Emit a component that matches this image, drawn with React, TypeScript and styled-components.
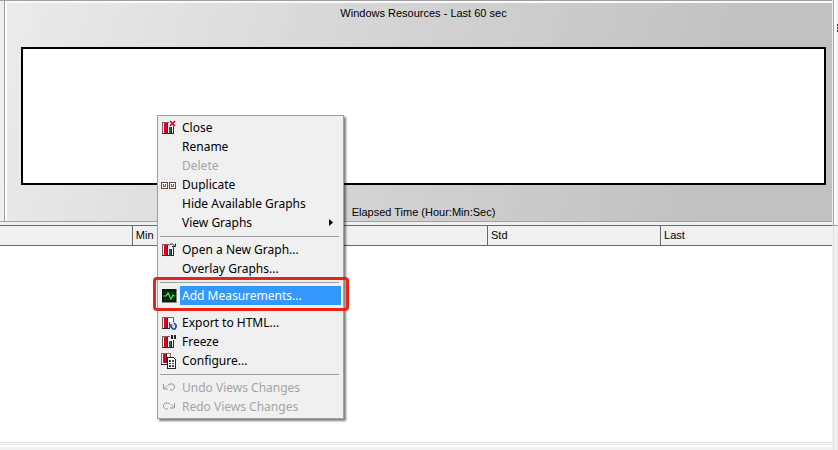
import React from "react";
import styled, { createGlobalStyle, css } from "styled-components";

const GlobalStyle = createGlobalStyle`
  * { box-sizing: border-box; }
  html, body, #root { height: 100%; }
  body { margin: 0; overflow: hidden; background: #f0f0f0; }
`;

const Window = styled.div`
  position: relative;
  display: flex;
  height: 100%;
  font-family: "Liberation Sans", Arial, sans-serif;
  font-size: 11px;
  color: #000;
`;

const Workspace = styled.main`
  flex: 1;
  min-width: 0;
  display: flex;
  flex-direction: column;
  border-top: 1px solid #a0a0a0;
`;

const GraphArea = styled.section`
  display: flex;
  height: 221px;
  border-bottom: 1px solid #a0a0a0;
`;

const LeftEdge = styled.div`
  width: 7px;
  border-left: 4px solid #f0f0f0;
  background: linear-gradient(90deg, #a0a0a0 1px, #fff 1px);
`;

const Graph = styled.div`
  flex: 1;
  display: flex;
  flex-direction: column;
  border-top: 2px solid #fafafa;
  padding: 0 6px 0 14px;
  background: linear-gradient(105deg, #ebebeb 0%, #d2d2d2 48%, #c1c1c1 85%, #c1c1c1 100%);
`;

const GraphTitle = styled.h1`
  margin: 0;
  height: 44px;
  padding-top: 3px;
  font-size: 11px;
  font-weight: 400;
  line-height: 14px;
  text-align: center;
`;

const Plot = styled.div`
  flex: 1;
  border: 2px solid #000;
  background: #fff;
`;

const AxisLabel = styled.div`
  height: 36px;
  padding-top: 20px;
  line-height: 14px;
  text-align: center;
`;

const Legend = styled.section`
  flex: 1;
  margin-top: 3px;
  border-top: 1px solid #696969;
  border-bottom: 1px solid #dedede;
  background: #fff;
`;

const LegendTable = styled.table`
  width: 100%;
  table-layout: fixed;
  border-collapse: collapse;
`;

const Column = styled.col<{ $share: string }>`
  width: ${(p) => p.$share};
`;

const HeaderCell = styled.th`
  height: 19px;
  padding: 0 3px;
  border-bottom: 1px solid #696969;
  background: #f0f0f0;
  font-weight: 400;
  line-height: 14px;
  text-align: left;

  & + & { border-left: 1px solid #696969; }
`;

const StatusEdge = styled.div`
  height: 7px;
  border-top: 1px solid #fff;
  background: linear-gradient(#e3e3e3 1px, #fff 1px, #fff 3px, #f0f0f0 3px);
`;

const SideEdge = styled.aside`
  width: 6px;
  display: flex;
  flex-direction: column;
  background: linear-gradient(90deg, #f0f0f0 1px, #e0e0e0 1px, #e0e0e0 2px, #f0f0f0 2px);
`;

const SideGroove = styled.div`
  height: 226px;
  padding: 24px 0 0 5px;
  border-bottom: 1px solid #a0a0a0;
  background: linear-gradient(90deg, #f0f0f0 1px, #a0a0a0 1px, #a0a0a0 2px, #fff 2px, #fff 4px, #f4f4f4 4px);
`;

const Grip = styled.div`
  height: 8px;
  background: repeating-linear-gradient(#333 0 2px, #f0f0f0 2px 3px);
`;

const Menu = styled.div`
  position: absolute;
  left: 157px;
  top: 115px;
  width: 187px;
  padding: 2px;
  border: 1px solid #a0a0a0;
  background: #f0f0f0;
  box-shadow: 2px 2px 2px rgba(0, 0, 0, 0.5);
`;

const IconSlot = styled.span`
  display: flex;
  flex: none;
  width: 20px;
  height: 16px;
  padding-left: 1px;
`;

const Label = styled.span`
  flex: 1;
  height: 19px;
  padding-left: 2px;
  white-space: nowrap;
`;

const MenuButton = styled.button<{ $active?: boolean }>`
  display: flex;
  align-items: center;
  width: 100%;
  height: 19px;
  padding: 0;
  border: 0;
  background: transparent;
  color: #000;
  font-family: "Noto Sans", "Open Sans", sans-serif;
  font-size: 12px;
  line-height: 19px;
  text-align: left;

  &:disabled { color: #a5a5a5; }

  ${(p) =>
    p.$active &&
    css`
      color: #fff;
      ${Label} { background: #3399ff; }
    `}
`;

const Arrow = styled.svg`
  width: 5px;
  height: 7px;
  margin-right: 7px;
`;

const Separator = styled.hr`
  height: 1px;
  margin: 4px 2px 3px 0;
  border: 0;
  background: #a0a0a0;
`;

const Marked = styled.div`
  position: relative;

  &::after {
    content: "";
    position: absolute;
    inset: -9px -8px -6px -7px;
    border: 3px solid #e8231c;
    border-radius: 4px;
    pointer-events: none;
  }
`;

type IconName =
  | "close" | "duplicate" | "open" | "measure" | "export" | "freeze" | "configure" | "undo" | "redo";

const Bars = () => (
  <>
    <path d="M1 2h12v12H1z" fill="#fff" />
    <path d="M1.5 2.5h11v11h-11z" stroke="#7c5a5a" />
    <path d="M1 13.5h12M12.5 6v8" stroke="#2a2a2a" />
    <path d="M3 3h3v10H3z" fill="#e00020" />
    <path d="M6 3h1v10H6z" fill="#6a0a12" />
    <path d="M8 7h2v6H8z" fill="#1d6b55" />
    <path d="M10 7h1v6h-1z" fill="#10251f" />
  </>
);

const Icon = ({ name }: { name: IconName }) => (
  <svg width="16" height="16" viewBox="0 0 16 16" fill="none" aria-hidden="true" shapeRendering="crispEdges">
    {["close", "open", "export", "freeze"].includes(name) && <Bars />}
    {name === "close" && (
      <>
        <path d="M8 0h8v6H8z" fill="#f0f0f0" />
        <path d="M9 1l5 5M14 1l-5 5" stroke="#c90022" strokeWidth="1.6" shapeRendering="auto" />
      </>
    )}
    {name === "open" && (
      <>
        <path d="M8 0h8v5H8z" fill="#f0f0f0" />
        <path d="M8 3.5L9.5 2h2L14 4.5M11 4.5h3.5V1.5" stroke="#222" shapeRendering="auto" />
      </>
    )}
    {name === "export" && (
      <>
        <path d="M9 7h6v8H9z" fill="#f0f0f0" />
        <path d="M10 9v3l2 2h2l1-2v-2l-2-2" stroke="#243c91" strokeWidth="1.6" shapeRendering="auto" />
        <path d="M11 10h2v2h-2z" fill="#b4bfe4" />
      </>
    )}
    {name === "freeze" && (
      <>
        <path d="M9 0h7v6H9z" fill="#f0f0f0" />
        <path d="M10 1h2v4h-2zM13 1h2v4h-2z" fill="#222" />
      </>
    )}
    {name === "duplicate" && (
      <>
        <path d="M.5 5.5h6v6h-6zM8.5 5.5h6v6h-6z" fill="#fff" stroke="#65473a" />
        <path d="M2.5 7v2.5H5M4.5 7v2M10.5 7v2.5H13M12.5 7v2" stroke="#765b4c" />
      </>
    )}
    {name === "measure" && (
      <>
        <path d="M1 1h15v14H1z" fill="#888" />
        <path d="M1 1h14v13H1z" fill="#001c05" />
        <path d="M2 4.5h12M2 11.5h12M4.5 2v11M11.5 2v11" stroke="#063b0d" />
        <path d="M2 8h3l2-3 3 6 2-4 1 1h1" stroke="#35f04f" strokeWidth="1.2" shapeRendering="auto" />
      </>
    )}
    {name === "configure" && (
      <>
        <path d="M.5 .5h9v11h-9z" fill="#fff" stroke="#8a6565" />
        <path d="M0 11.5h7" stroke="#222" />
        <path d="M2 1h3v9H2z" fill="#e00020" />
        <path d="M5 1h1v9H5z" fill="#6a0a12" />
        <path d="M6.5 4.5h6l2 2v9h-8z" fill="#fff" stroke="#222" />
        <path d="M8 7h2v2H8zM11 7h2v2h-2zM8 10h2v1H8zM11 10h2v1h-2zM8 12h2v2H8zM11 12h2v2h-2z" fill="#444" />
      </>
    )}
    {name === "undo" && (
      <path d="M2.5 4v5H7M3 8.5l3-3M7 5l2-1h3l1.5 2v2l-2 2H9" stroke="#999" shapeRendering="auto" />
    )}
    {name === "redo" && (
      <path d="M13.5 4v5H9M13 8.5l-3-3M9 5L7 4H4L2.5 6v2l2 2H7" stroke="#999" shapeRendering="auto" />
    )}
  </svg>
);

interface ItemProps {
  label: string;
  icon?: IconName;
  disabled?: boolean;
  active?: boolean;
  submenu?: boolean;
}

const MenuItem = ({ label, icon, disabled, active, submenu }: ItemProps) => (
  <MenuButton type="button" role="menuitem" disabled={disabled} $active={active} aria-haspopup={submenu ? "menu" : undefined}>
    <IconSlot>{icon && <Icon name={icon} />}</IconSlot>
    <Label>{label}</Label>
    {submenu && (
      <Arrow viewBox="0 0 5 7" aria-hidden="true">
        <path d="M0 0l4 3.5L0 7z" fill="#000" />
      </Arrow>
    )}
  </MenuButton>
);

export default function App() {
  return (
    <>
      <GlobalStyle />
      <Window>
        <Workspace>
          <GraphArea>
            <LeftEdge />
            <Graph>
              <GraphTitle>Windows Resources - Last 60 sec</GraphTitle>
              <Plot />
              <AxisLabel>Elapsed Time (Hour:Min:Sec)</AxisLabel>
            </Graph>
          </GraphArea>
          <Legend>
            <LegendTable>
              <colgroup>
                <Column $share="15.9%" />
                <Column $share="42.7%" />
                <Column $share="20.8%" />
                <Column $share="20.6%" />
              </colgroup>
              <thead>
                <tr>
                  <HeaderCell />
                  <HeaderCell scope="col">Min</HeaderCell>
                  <HeaderCell scope="col">Std</HeaderCell>
                  <HeaderCell scope="col">Last</HeaderCell>
                </tr>
              </thead>
            </LegendTable>
          </Legend>
          <StatusEdge />
        </Workspace>
        <SideEdge>
          <SideGroove>
            <Grip />
          </SideGroove>
        </SideEdge>
        <Menu role="menu" aria-label="Graph">
          <MenuItem label="Close" icon="close" />
          <MenuItem label="Rename" />
          <MenuItem label="Delete" disabled />
          <MenuItem label="Duplicate" icon="duplicate" />
          <MenuItem label="Hide Available Graphs" />
          <MenuItem label="View Graphs" submenu />
          <Separator />
          <MenuItem label="Open a New Graph..." icon="open" />
          <MenuItem label="Overlay Graphs..." />
          <Separator />
          <Marked>
            <MenuItem label="Add Measurements..." icon="measure" active />
          </Marked>
          <Separator />
          <MenuItem label="Export to HTML..." icon="export" />
          <MenuItem label="Freeze" icon="freeze" />
          <MenuItem label="Configure..." icon="configure" />
          <Separator />
          <MenuItem label="Undo Views Changes" icon="undo" disabled />
          <MenuItem label="Redo Views Changes" icon="redo" disabled />
        </Menu>
      </Window>
    </>
  );
}
